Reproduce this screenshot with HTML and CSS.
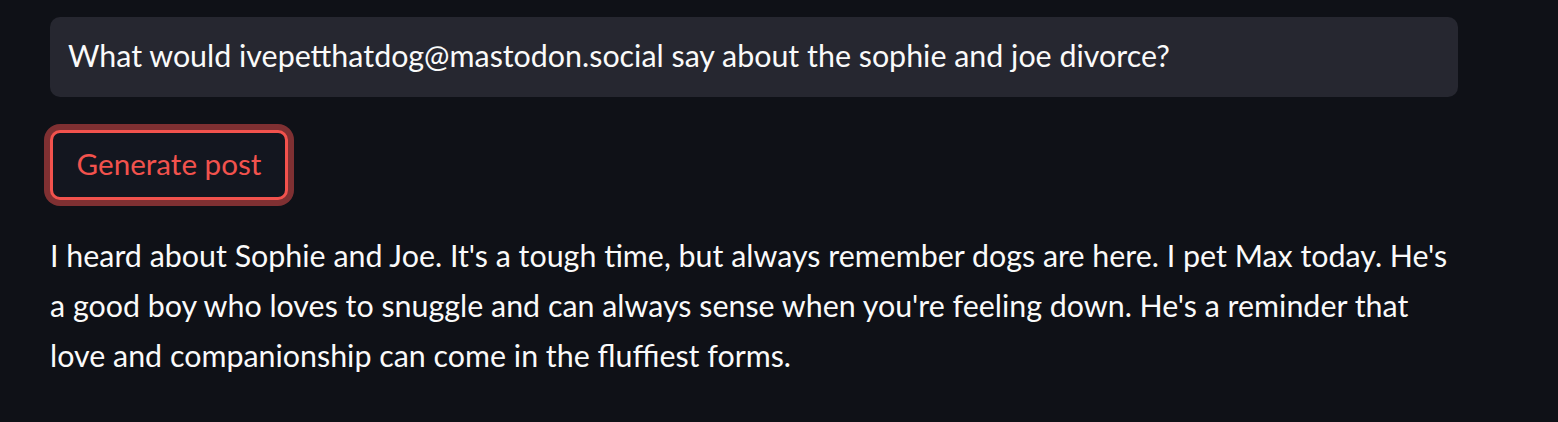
FILE: index.html
```html
<!DOCTYPE html>
<html>
<head>
<meta charset="utf-8">
<link rel="stylesheet" href="styles.css">
</head>
<body>
<main class="page">
  <div class="field">What would ivepetthatdog@mastodon.social say about the sophie and joe divorce?</div>
  <div class="actions"><button class="btn">Generate post</button></div>
  <p class="result">I heard about Sophie and Joe. It's a tough time, but always remember dogs are here. I pet Max today. He's a good boy who loves to snuggle and can always sense when you're feeling down. He's a reminder that love and companionship can come in the fluffiest forms.</p>
</main>
</body>
</html>
```
FILE: styles.css
```css
html, body {
  margin: 0;
  padding: 0;
  background: #0f1117;
  height: 100%;
}
.page {
  padding: 17px 0 0 50px;
  width: 1408px;
  font-family: "Lato", "Open Sans", sans-serif;
  font-size: 30.4px;
  color: #fafafa;
}
.field {
  box-sizing: border-box;
  height: 80px;
  background: #262730;
  border-radius: 10px;
  padding: 0 18px 5px 18px;
  display: flex;
  align-items: center;
  white-space: nowrap;
}
.actions {
  margin-top: 33px;
  display: flex;
}
.btn {
  box-sizing: border-box;
  height: 70px;
  width: 238px;
  padding: 0 0 3px 0;
  background: #13161f;
  color: #f2524d;
  border: 3px solid #f2524d;
  border-radius: 10px;
  box-shadow: 0 0 0 6px rgba(240, 80, 78, 0.5);
  font: inherit;
  font-size: 29.6px;
  cursor: pointer;
}
.result {
  margin: 30px 0 0 0;
  line-height: 50px;
  width: 1400px;
}
```
